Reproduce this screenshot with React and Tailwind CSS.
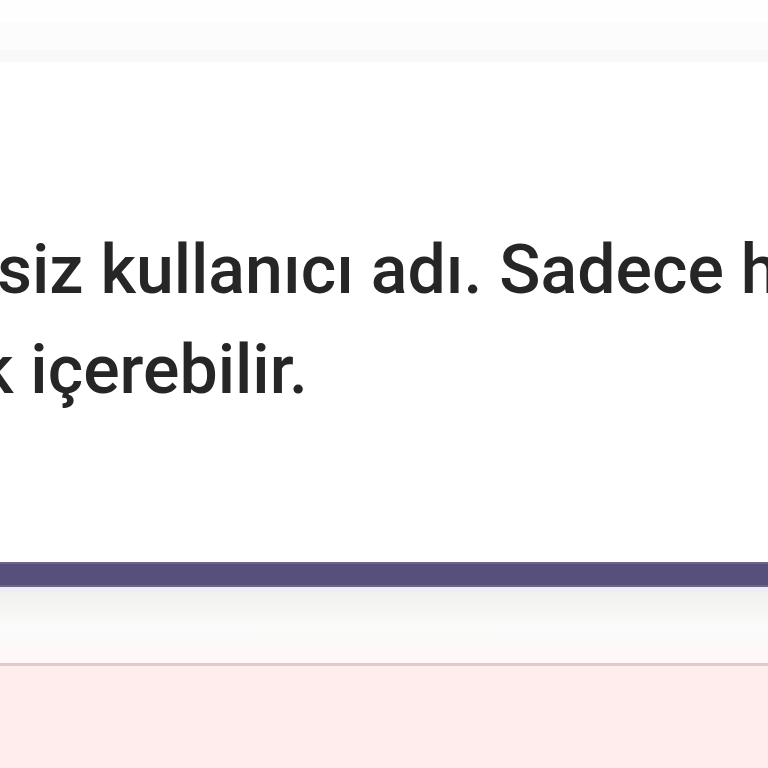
import React from 'react';

function HelpText() {
  return (
    <div className="overflow-hidden text-[68px] leading-[100px] font-medium text-[#262626]" style={{ fontFamily: 'Roboto, "Liberation Sans", sans-serif' }}>
      <div className="flex whitespace-nowrap">
        <div className="w-0 flex justify-end shrink-0">
          <span>Benzer</span>
        </div>
        <span className="-ml-[3px]">siz kullanıcı adı. Sadece harf, rakam ve alt çizgi</span>
      </div>
      <div className="flex whitespace-nowrap">
        <div className="w-0 flex justify-end shrink-0">
          <span>en fazla 30 karakterli</span>
        </div>
        <span className="-ml-[22px]">k içerebilir.</span>
      </div>
    </div>
  );
}

export default function App() {
  return (
    <div className="w-[768px] h-[768px] overflow-hidden bg-white flex flex-col">
      <div className="h-[22px] bg-[#fefefe]" />
      <div className="h-[28px] bg-[#fcfcfc]" />
      <div className="h-[12px] bg-[#f8f8f8]" />

      <div className="h-[500px] bg-white pt-[158px]">
        <HelpText />
      </div>

      <div className="h-[25px] bg-[#56507a] border-y-2 border-[#6a6590]" />
      <div className="h-[5px] bg-[#eeecf8]" />
      <div className="h-[71px] bg-gradient-to-b from-[#f1f2ee] via-[#fafbfa] to-[#fff7f8]" />
      <div className="h-[3px] bg-[#e2c9cc]" />
      <div className="flex-1 bg-[#ffecec]" />
    </div>
  );
}
